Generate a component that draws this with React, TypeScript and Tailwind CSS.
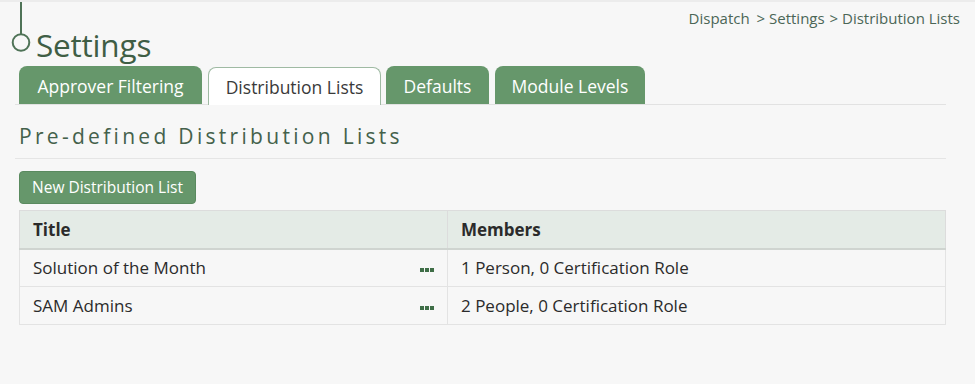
import React from "react";

const tabs = [
  { label: "Approver Filtering", w: "w-[183px]", active: false },
  { label: "Distribution Lists", w: "w-[173px]", active: true },
  { label: "Defaults", w: "w-[103px]", active: false },
  { label: "Module Levels", w: "w-[150px]", active: false },
];

const rows = [
  { title: "Solution of the Month", members: "1 Person, 0 Certification Role" },
  { title: "SAM Admins", members: "2 People, 0 Certification Role" },
];

export default function App() {
  return (
    <div
      className="min-h-[384px] w-[975px] bg-[#f7f7f7] border-t-2 border-[#ececec] text-[#333]"
      style={{ fontFamily: '"Open Sans", "Noto Sans", sans-serif' }}
    >
      <div className="pl-[15px] w-[946px]">
        {/* header */}
        <div className="flex justify-between">
          <div className="flex items-end h-[62px]">
            <svg width="22" height="54" viewBox="0 0 22 54" className="mb-[8px] -ml-[5px]">
              <line x1="11" y1="0" x2="11" y2="32" stroke="#4f7357" strokeWidth="2" />
              <circle cx="11" cy="40.5" r="8.3" fill="none" stroke="#4f7357" strokeWidth="2" />
            </svg>
            <h1 className="text-[31.5px] leading-none text-[#3f5e45] ml-[4px] mb-[4px] tracking-[-0.2px]">
              Settings
            </h1>
          </div>
          <div className="pt-[5px] text-[15px] text-[#4b6656] -mr-[14px]">
            Dispatch <span className="ml-[3px]">&gt;</span> Settings{" "}
            <span className="ml-[1px]">&gt;</span> Distribution Lists
          </div>
        </div>

        {/* tabs */}
        <div className="mt-[2px] flex items-end gap-[5px] pl-[4px] border-b border-[#e2e2e2] h-[39px]">
          {tabs.map((t) => (
            <div
              key={t.label}
              className={
                t.active
                  ? `${t.w} h-[38px] pt-[2px] flex items-center justify-center rounded-t-[8px] bg-white border border-b-0 border-[#9fbaa3] text-[#3a3a3a] text-[17.5px] -mb-px`
                  : `${t.w} h-[38px] pt-[3px] flex items-center justify-center rounded-t-[8px] bg-[#66976b] text-white text-[17.5px] mr-[1px]`
              }
            >
              {t.label}
            </div>
          ))}
        </div>

        {/* section title */}
        <div className="mt-[17px] pl-[4px] pb-[8px] border-b border-[#e5e5e5]">
          <h2 className="text-[21px] leading-[28px] tracking-[3.3px] text-[#44614b]">
            Pre-defined Distribution Lists
          </h2>
        </div>

        <div className="pl-[4px]">
          <button className="mt-[12px] h-[33px] w-[177px] rounded-[4px] bg-[#66976b] border border-[#5a8a5f] text-white text-[15.5px]">
            New Distribution List
          </button>

          <table className="mt-[6px] w-[927px] border-collapse text-[17px] text-[#2b2b2b]">
            <thead>
              <tr className="bg-[#e4ebe6] h-[38px]">
                <th className="w-[428px] border border-[#dcdcdc] border-b-2 border-b-[#cfd4d0] text-left pl-[13px] font-bold">
                  Title
                </th>
                <th className="border border-[#dcdcdc] border-b-2 border-b-[#cfd4d0] text-left pl-[13px] font-bold">
                  Members
                </th>
              </tr>
            </thead>
            <tbody>
              {rows.map((r) => (
                <tr key={r.title} className="h-[38px]">
                  <td className="border border-[#e3e3e3] pl-[13px] pr-[13px]">
                    <div className="flex items-center justify-between">
                      <span>{r.title}</span>
                      <span className="flex gap-[1px] mt-[4px]">
                        <span className="w-[4px] h-[4px] bg-[#3f6e47]" />
                        <span className="w-[4px] h-[4px] bg-[#3f6e47]" />
                        <span className="w-[4px] h-[4px] bg-[#3f6e47]" />
                      </span>
                    </div>
                  </td>
                  <td className="border border-[#e3e3e3] pl-[13px]">{r.members}</td>
                </tr>
              ))}
            </tbody>
          </table>
        </div>
      </div>
    </div>
  );
}
